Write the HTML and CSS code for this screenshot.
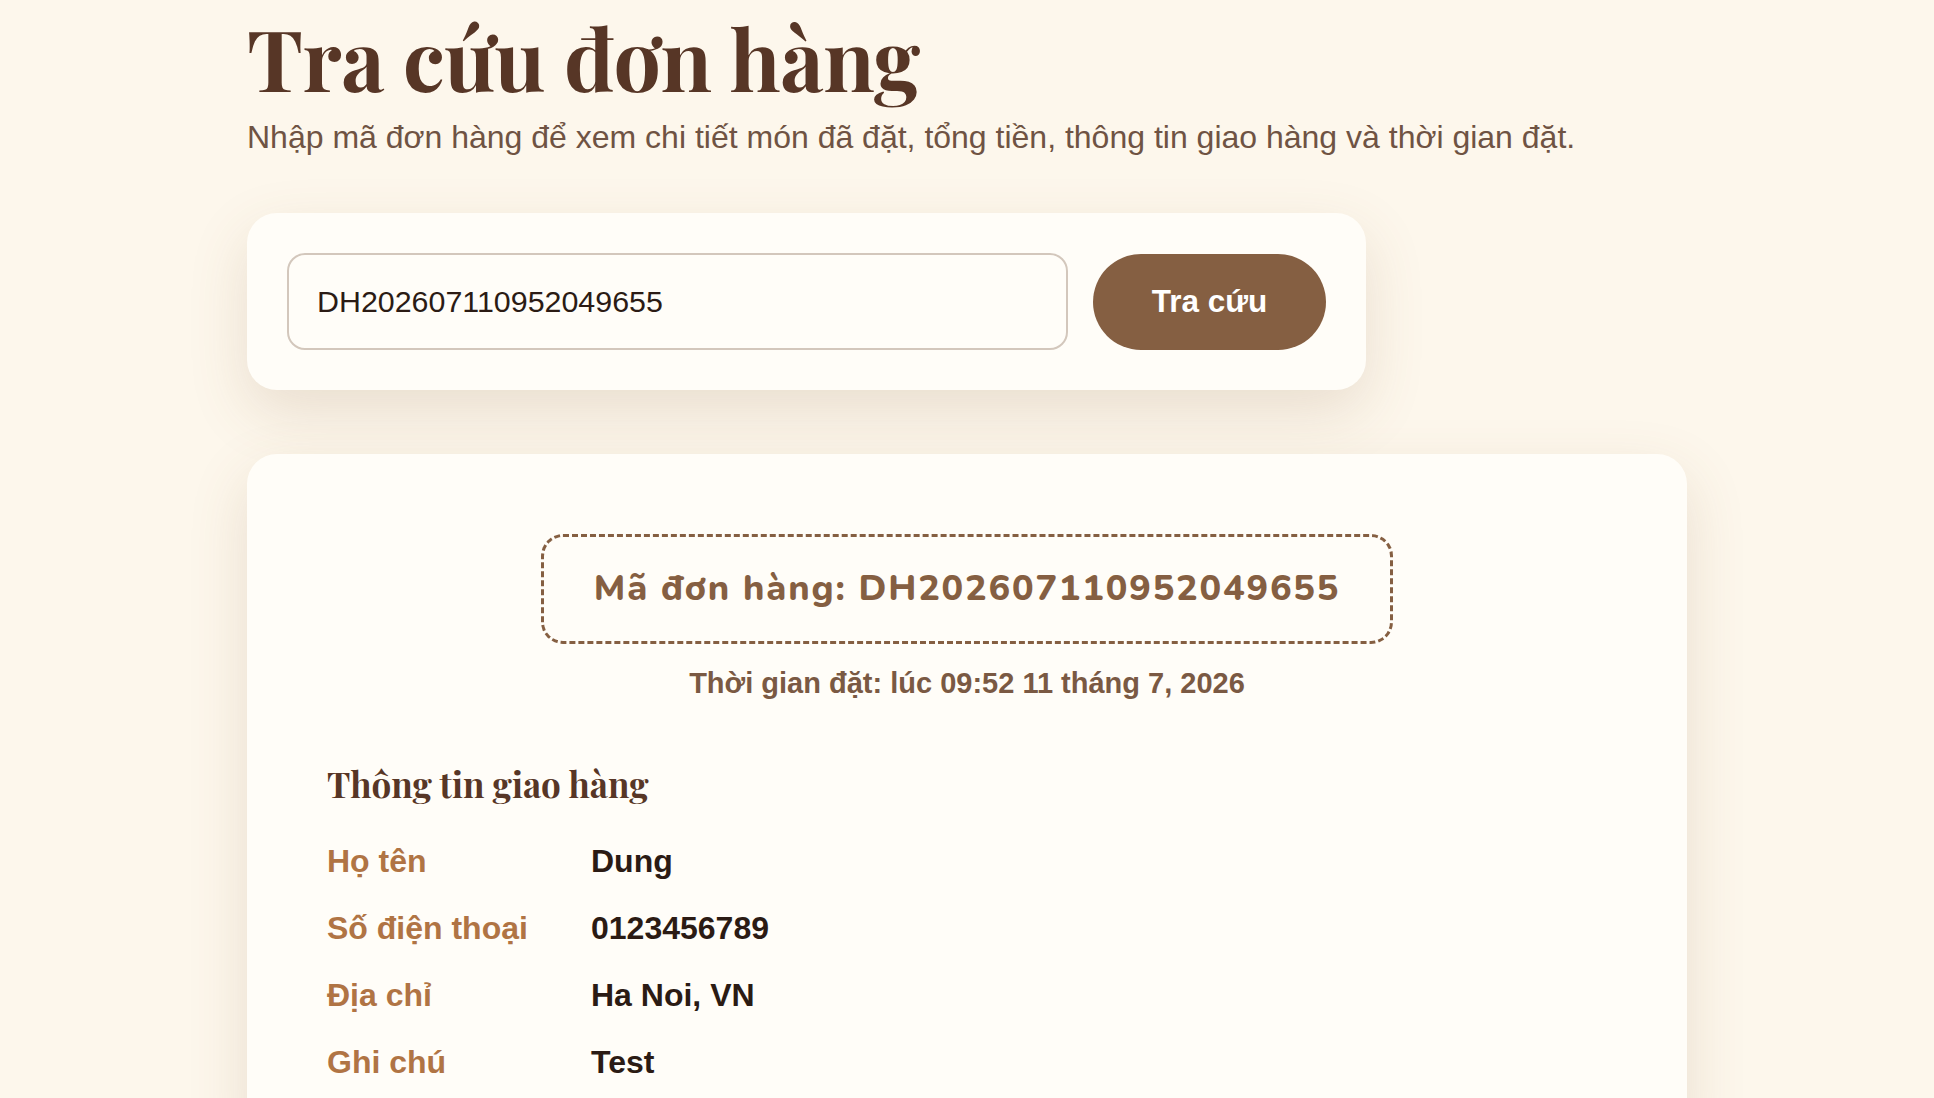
FILE: index.html
```html
<!DOCTYPE html>
<html lang="vi">
<head>
<meta charset="UTF-8" />
<meta name="viewport" content="width=device-width, initial-scale=1" />
<title>Tra cứu đơn hàng</title>
<link rel="stylesheet" href="styles.css">
</head>
<body>
<main class="page">
  <header class="page-head">
    <h1>Tra cứu đơn hàng</h1>
    <p>Nhập mã đơn hàng để xem chi tiết món đã đặt, tổng tiền, thông tin giao hàng và thời gian đặt.</p>
  </header>

  <form class="lookup" aria-label="Tra cứu đơn hàng">
    <input type="text" class="lookup-input" name="code" value="DH202607110952049655" aria-label="Mã đơn hàng" />
    <button type="submit" class="lookup-btn">Tra cứu</button>
  </form>

  <section class="order">
    <div class="order-top">
      <div class="order-code">Mã đơn hàng: DH202607110952049655</div>
      <p class="order-time">Thời gian đặt: lúc 09:52 11 tháng 7, 2026</p>
    </div>

    <h2 class="order-title">Thông tin giao hàng</h2>
    <dl class="info">
      <dt>Họ tên</dt>
      <dd>Dung</dd>
      <dt>Số điện thoại</dt>
      <dd>0123456789</dd>
      <dt>Địa chỉ</dt>
      <dd>Ha Noi, VN</dd>
      <dt>Ghi chú</dt>
      <dd>Test</dd>
    </dl>
  </section>
</main>
</body>
</html>
```

FILE: styles.css
```css
/* Reset */
* {
  box-sizing: border-box;
}
html, body {
  margin: 0;
  padding: 0;
}
body {
  background: #fdf7ec;
  color: #2b1b14;
  font-family: "Liberation Sans", Arial, sans-serif;
}

.page {
  max-width: 1440px;
  margin: 0 auto;
  padding: 11px 0 60px;
}

/* Heading */
.page-head h1 {
  margin: 0;
  font-family: "Playfair Display", "Liberation Serif", serif;
  font-size: 84px;
  font-weight: 700;
  line-height: 1.1;
  color: #573626;
  letter-spacing: -0.5px;
}
.page-head p {
  margin: 10px 0 0;
  font-size: 32px;
  line-height: 1.5;
  color: #6f5343;
}

/* Search box */
.lookup {
  display: flex;
  align-items: center;
  gap: 25px;
  max-width: 1119px;
  margin-top: 52px;
  padding: 40px;
  background: #fffdf8;
  border-radius: 30px;
  box-shadow: 0 22px 60px rgba(130, 95, 55, 0.16);
}
.lookup-input {
  flex: 1;
  min-width: 0;
  padding: 29px 28px;
  border: 2px solid #d3c7bc;
  border-radius: 18px;
  background: #fffdf8;
  font-family: inherit;
  font-size: 30.4px;
  color: #2b1b14;
  outline: none;
}
.lookup-btn {
  width: 233px;
  height: 96px;
  border: none;
  border-radius: 48px;
  background: #855f42;
  color: #fff;
  font-family: inherit;
  font-size: 31.5px;
  font-weight: 700;
  cursor: pointer;
}
.lookup-btn:hover {
  background: #6f4e35;
}

/* Result card */
.order {
  margin-top: 64px;
  padding: 80px 80px 60px;
  background: #fffdf8;
  border-radius: 30px;
  box-shadow: 0 22px 60px rgba(130, 95, 55, 0.16);
}
.order-top {
  text-align: center;
}
.order-code {
  display: inline-block;
  padding: 27px 50px;
  border: 3px dashed #855f42;
  border-radius: 22px;
  font-family: Nunito, Lato, "Open Sans", sans-serif;
  font-size: 36px;
  font-weight: 800;
  line-height: 50px;
  letter-spacing: 1.85px;
  color: #855f42;
}
.order-time {
  margin: 19px 0 0;
  font-size: 29px;
  font-weight: 700;
  line-height: 40px;
  color: #7a5943;
}

.order-title {
  margin: 58px 0 0;
  font-family: "Playfair Display", "Liberation Serif", serif;
  font-size: 35px;
  font-weight: 700;
  line-height: 1.3;
  color: #573626;
}

.info {
  display: grid;
  grid-template-columns: 264px 1fr;
  row-gap: 23.5px;
  margin: 33px 0 0;
  font-size: 32px;
  font-weight: 700;
  line-height: 43.5px;
}
.info dt {
  color: #b07444;
}
.info dd {
  margin: 0;
  color: #2b1b14;
}
```
